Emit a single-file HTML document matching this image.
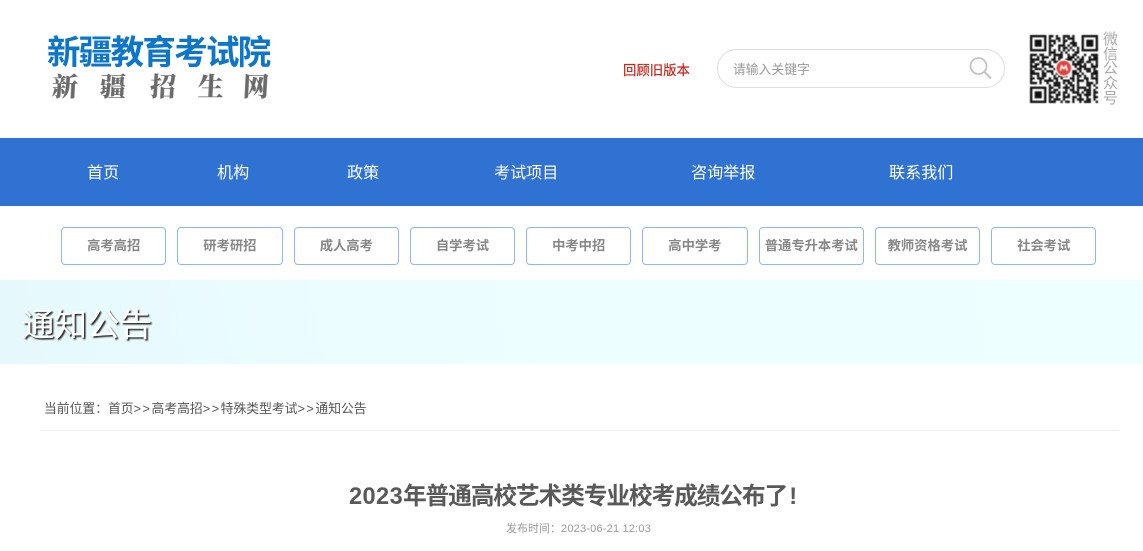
<!DOCTYPE html>
<html lang="zh-CN">
<head>
<meta charset="utf-8">
<title>通知公告</title>
<style>
html,body{margin:0;padding:0;background:#fff}
body{width:1143px;height:551px;position:relative;overflow:hidden;font-family:"Liberation Sans","Noto Sans CJK SC",sans-serif}
.a{position:absolute;white-space:nowrap}
.nav{left:0;top:138px;width:1143px;height:68px;background:#3072d2}
.nav span{position:absolute;top:0;line-height:71px;color:#fff;font-size:16.1px;white-space:nowrap}
.b{top:227px;width:103.4px;height:36px;border:1px solid #8ab9f7;border-radius:4px;text-align:center;line-height:35px;font-size:13.3px;font-weight:bold;color:#888;background:#fff}
.logo2{top:68px;font-family:"Noto Serif CJK SC",serif;font-weight:900;font-size:26px;line-height:36px;color:#6b6b6b;transform:skewX(-3deg);filter:blur(.35px)}
.g{letter-spacing:1.5px}
</style>
</head>
<body>
<div class="a" style="left:47px;top:31.5px;font-size:33.5px;line-height:44px;color:#0d76c9;font-weight:bold;letter-spacing:-1.7px">新疆教育考试院</div>
<div class="a logo2" style="left:52px">新</div>
<div class="a logo2" style="left:100px">疆</div>
<div class="a logo2" style="left:150px">招</div>
<div class="a logo2" style="left:198px">生</div>
<div class="a logo2" style="left:243px">网</div>

<div class="a" style="left:623px;top:61px;font-size:13.4px;line-height:20px;color:#c9241b;-webkit-text-stroke:.2px #c9241b">回顾旧版本</div>

<div class="a" style="left:717px;top:49px;width:286px;height:37px;border:1px solid #ddd;border-radius:20px;background:#fff"></div>
<div class="a" style="left:733px;top:60px;font-size:12.8px;line-height:19px;color:#999">请输入关键字</div>
<svg class="a" style="left:968px;top:56px" width="24" height="24" viewBox="0 0 24 24" fill="none" stroke="#c4c4c4">
<circle cx="10.5" cy="10" r="8" stroke-width="1.8"/>
<path d="M16.3 15.8L23 22.5" stroke-width="2.1"/>
</svg>

<svg class="a" style="left:1030px;top:35px;filter:blur(.4px)" width="68" height="68" viewBox="0 0 29 29" fill="none" stroke="#111" stroke-width="1">
<rect x=".5" y=".5" width="6" height="6"/><rect x="2" y="2" width="3" height="3" fill="#111" stroke="none"/>
<rect x="22.5" y=".5" width="6" height="6"/><rect x="24" y="2" width="3" height="3" fill="#111" stroke="none"/>
<rect x=".5" y="22.5" width="6" height="6"/><rect x="2" y="24" width="3" height="3" fill="#111" stroke="none"/>
<path d="M8 .5H21" stroke-dasharray="2 1 1 2 3 1 1 2"/>
<path d="M8 1.5H21" stroke-dasharray="1 2 2 1 1 1 3 2"/>
<path d="M8 2.5H21" stroke-dasharray="3 1 1 1 2 2 1 2"/>
<path d="M8 3.5H21" stroke-dasharray="1 1 1 3 1 2 3 1"/>
<path d="M8 4.5H21" stroke-dasharray="2 2 3 1 1 1 2 1"/>
<path d="M8 5.5H21" stroke-dasharray="1 3 1 1 2 1 1 2"/>
<path d="M8 6.5H21" stroke-dasharray="1 1 1 1 1 1 1 1"/>
<path d="M8 7.5H21" stroke-dasharray="3 2 1 1 1 3 2 1"/>
<path d="M0 8.5H29" stroke-dasharray="3 1 2 2 1 1 4 2 1 1 2 3 1 2"/>
<path d="M0 9.5H29" stroke-dasharray="1 2 1 1 3 2 1 1 2 2 3 1 1 1"/>
<path d="M0 10.5H29" stroke-dasharray="4 1 1 3 2 1 1 2 3 1 1 1 2 2"/>
<path d="M0 11.5H29" stroke-dasharray="2 2 3 1 1 1 2 3 1 2 1 1 3 1"/>
<path d="M0 12.5H29" stroke-dasharray="1 1 2 1 4 3 1 1 2 2 4 1 1 2"/>
<path d="M0 13.5H29" stroke-dasharray="3 2 1 2 2 6 2 1 1 1 3 2"/>
<path d="M0 14.5H29" stroke-dasharray="1 1 3 1 1 3 1 6 1 2 2 1 3 1"/>
<path d="M0 15.5H29" stroke-dasharray="2 3 1 1 3 2 1 5 2 1 1 2 2 1"/>
<path d="M0 16.5H29" stroke-dasharray="4 1 2 2 1 1 3 2 1 1 3 1 1 3"/>
<path d="M0 17.5H29" stroke-dasharray="1 2 1 1 2 3 1 1 4 2 1 1 2 1"/>
<path d="M0 18.5H29" stroke-dasharray="2 1 3 2 1 1 2 1 1 3 2 1 1 2"/>
<path d="M0 19.5H29" stroke-dasharray="1 3 1 1 4 1 1 2 3 1 1 1 3 1"/>
<path d="M0 20.5H29" stroke-dasharray="3 1 1 2 1 2 3 1 1 1 2 2 1 3"/>
<path d="M8 21.5H29" stroke-dasharray="1 1 3 2 1 1 2 1 1 3 2 1"/>
<path d="M8 22.5H29" stroke-dasharray="2 2 1 1 3 1 1 1 4 1 1 2"/>
<path d="M8 23.5H29" stroke-dasharray="1 1 2 3 1 1 2 1 1 2 3 1"/>
<path d="M8 24.5H29" stroke-dasharray="3 1 1 1 2 2 3 1 1 1 2 1"/>
<path d="M8 25.5H29" stroke-dasharray="1 2 2 1 1 1 1 3 2 1 3 1"/>
<path d="M8 26.5H29" stroke-dasharray="2 1 1 2 3 1 2 1 1 2 1 2"/>
<path d="M8 27.5H29" stroke-dasharray="1 1 3 1 1 3 1 1 3 1 2 1"/>
<path d="M8 28.5H29" stroke-dasharray="3 2 1 1 2 1 1 2 1 1 3 2"/>
<circle cx="14.4" cy="14.1" r="3.4" fill="#e0413c" stroke="#fff" stroke-width=".6"/>
<path d="M12.9 15.2L13.5 13.2L14.4 14.3L15.3 13.2L15.9 15.2" stroke="#fff" stroke-width=".7"/>
</svg>
<div class="a" style="left:1103px;top:33px;width:15px;font-size:15px;line-height:14.7px;color:#aaa;white-space:normal;text-align:center">微信公众号</div>

<div class="a nav">
<span style="left:87px">首页</span>
<span style="left:217px">机构</span>
<span style="left:347px">政策</span>
<span style="left:494px">考试项目</span>
<span style="left:691px">咨询举报</span>
<span style="left:889px">联系我们</span>
</div>

<div class="a b" style="left:61px">高考高招</div>
<div class="a b" style="left:177.2px">研考研招</div>
<div class="a b" style="left:293.6px">成人高考</div>
<div class="a b" style="left:409.8px">自学考试</div>
<div class="a b" style="left:526px">中考中招</div>
<div class="a b" style="left:642.2px">高中学考</div>
<div class="a b" style="left:758.6px">普通专升本考试</div>
<div class="a b" style="left:874.8px">教师资格考试</div>
<div class="a b" style="left:991px">社会考试</div>

<div class="a" style="left:0;top:280px;width:1143px;height:84px;background:linear-gradient(80deg,#e5f8fc 0%,#ebfdff 30%,#edffff 100%)"></div>
<div class="a" style="left:22px;top:302px;font-size:32.5px;line-height:46px;color:#fff;text-shadow:1.5px 1.5px 1.5px #222">通知公告</div>

<div class="a" style="left:44px;top:400px;font-size:12.8px;line-height:18px;color:#555">当前位置：首页<span class="g">&gt;&gt;</span>高考高招<span class="g">&gt;&gt;</span>特殊类型考试<span class="g">&gt;&gt;</span>通知公告</div>
<div class="a" style="left:40px;top:430px;width:1079px;height:1px;background:#eee"></div>

<div class="a" style="left:349px;top:480px;font-size:23.6px;line-height:34px;font-weight:bold;color:#595959;letter-spacing:-1px"><span style="letter-spacing:.4px">2023</span>年普通高校艺术类专业校考成绩公布了<span style="margin-left:2px">!</span></div>
<div class="a" style="left:506px;top:521px;font-size:11px;line-height:16px;color:#999">发布时间：<span style="letter-spacing:.2px">2023-06-21 12:03</span></div>
</body>
</html>
